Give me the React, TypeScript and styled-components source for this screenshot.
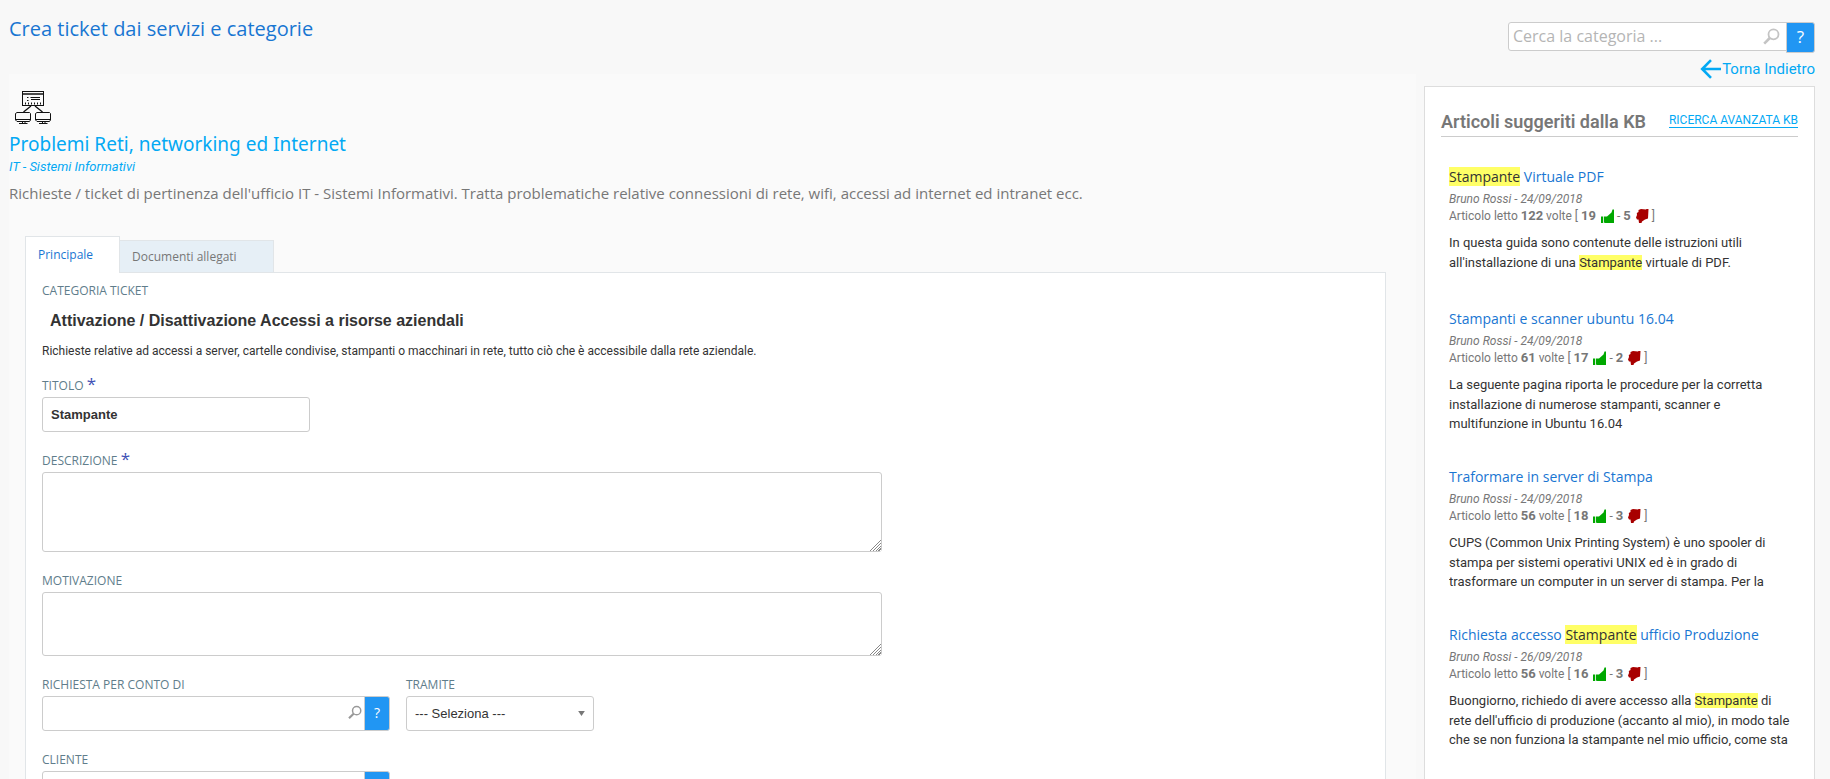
import React from 'react';
import styled, { createGlobalStyle, css } from 'styled-components';

const openSans = '"Open Sans", "Noto Sans", sans-serif';
const roboto = 'Roboto, "Liberation Sans", sans-serif';
const arial = '"Liberation Sans", Arial, sans-serif';

const colors = {
  page: '#f8f8f8',
  surface: '#fafafa',
  border: '#dddddd',
  panelBorder: '#e1e5e8',
  control: '#cccccc',
  title: '#1976d2',
  accent: '#03a9f4',
  button: '#2196f3',
  muted: '#777777',
  label: '#607d8b',
  text: '#333333',
  mark: '#ffff66',
};

const GlobalStyle = createGlobalStyle`
  *, *::before, *::after { box-sizing: border-box; }
  body {
    margin: 0;
    background: ${colors.page};
    color: ${colors.text};
    font-family: ${roboto};
    font-size: 13px;
  }
  h1, h2, h3, p { margin: 0; font-weight: 400; }
  a { text-decoration: none; }
`;

const Page = styled.div`
  display: flex;
  align-items: stretch;
  height: 100vh;
  overflow: hidden;
  padding: 0 15px 0 9px;
`;

const MainColumn = styled.main`
  flex: 1;
  min-width: 0;
  display: flex;
  flex-direction: column;
`;

const PageTitle = styled.h1`
  flex: none;
  height: 74px;
  padding-top: 15px;
  color: ${colors.title};
  font-family: ${openSans};
  font-size: 20px;
  line-height: 28px;
`;

const Surface = styled.section`
  flex: 1 0 auto;
  padding: 16px 30px 40px 0;
  background: ${colors.surface};
`;

const NetworkIcon = styled.svg`
  display: block;
  width: 38px;
  height: 36px;
  margin-left: 5px;
`;

const CategoryTitle = styled.h2`
  margin-top: 4px;
  color: ${colors.accent};
  font-family: "Noto Sans", sans-serif;
  font-size: 19px;
  line-height: 28px;
`;

const Department = styled.p`
  color: ${colors.accent};
  font-size: 13px;
  font-style: italic;
  line-height: 18px;
`;

const Description = styled.p`
  margin-top: 7px;
  color: ${colors.muted};
  font-family: ${openSans};
  font-size: 15px;
  line-height: 20px;
`;

const Tabs = styled.div`
  display: flex;
  align-items: flex-end;
  margin: 33px 0 0 16px;
`;

const Tab = styled.button<{ $active?: boolean }>`
  width: ${p => (p.$active ? 95 : 155)}px;
  height: ${p => (p.$active ? 36 : 32)}px;
  margin-left: ${p => (p.$active ? 0 : -1)}px;
  padding: 0 12px;
  border: 1px solid ${colors.panelBorder};
  border-bottom-width: 0;
  background: ${p => (p.$active ? '#ffffff' : '#e6eff6')};
  color: ${p => (p.$active ? colors.title : colors.muted)};
  font-family: ${openSans};
  font-size: 12px;
  text-align: left;
  ${p => p.$active && css`
    position: relative;
    margin-bottom: -1px;
    height: 37px;
    padding-bottom: 2px;
  `}
`;

const Panel = styled.form`
  display: flex;
  flex-direction: column;
  align-items: flex-start;
  margin-left: 16px;
  padding: 10px 16px 40px;
  border: 1px solid ${colors.panelBorder};
  background: #ffffff;
`;

const labelText = css`
  display: block;
  height: 16px;
  color: ${colors.label};
  font-family: ${openSans};
  font-size: 12px;
  line-height: 16px;
`;

const Caption = styled.div`${labelText}`;
const Label = styled.label`${labelText}`;

const Required = styled.span`
  color: #3f51b5;
  font-size: 17px;
  line-height: 8px;
`;

const CategoryName = styled.h3`
  margin: 12px 0 0 8px;
  font-family: ${arial};
  font-size: 16px;
  font-weight: 700;
  line-height: 20px;
`;

const CategoryNote = styled.p`
  margin: 12px 0 19px;
  font-size: 12px;
  line-height: 16px;
`;

const Field = styled.div`
  display: flex;
  flex-direction: column;
  gap: 3px;
  margin-bottom: 21px;
`;

const FieldRow = styled.div`
  display: flex;
  gap: 16px;
`;

const control = css`
  border: 1px solid ${colors.control};
  border-radius: 3px;
  background-color: #ffffff;
  color: ${colors.text};
  font-family: ${arial};
  font-size: 13px;
  outline: none;
`;

const TextInput = styled.input`
  ${control}
  width: 268px;
  height: 35px;
  padding: 0 8px;
  font-weight: 700;
`;

const TextArea = styled.textarea<{ $height: number }>`
  ${control}
  display: block;
  width: 840px;
  height: ${p => p.$height}px;
  padding: 8px;
  resize: both;
  &::-webkit-resizer {
    background:
      linear-gradient(135deg, #ffffff 60%, transparent 60%),
      repeating-linear-gradient(135deg, #ffffff 0 1px, #888888 1px 2px);
  }
`;

const SelectBox = styled.div`
  display: flex;
  align-items: center;
  position: relative;
`;

const Select = styled.select`
  ${control}
  width: 188px;
  height: 35px;
  padding: 0 8px;
  appearance: none;
`;

const Caret = styled.svg`
  position: absolute;
  right: 9px;
  width: 7px;
  height: 5px;
  pointer-events: none;
`;

const Lookup = styled.div<{ $width: number }>`
  display: flex;
  align-items: flex-start;
  position: relative;
  width: ${p => p.$width}px;
`;

const LookupInput = styled.input<{ $search?: boolean }>`
  ${control}
  flex: 1;
  min-width: 0;
  height: ${p => (p.$search ? 29 : 35)}px;
  padding: ${p => (p.$search ? '0 32px 2px 4px' : '0 32px 0 8px')};
  border-radius: 3px 0 0 3px;
  font-family: ${p => (p.$search ? openSans : arial)};
  font-size: ${p => (p.$search ? 16 : 13)}px;
  &::placeholder { color: #b5b5b5; opacity: 1; }
`;

const LookupButton = styled.button<{ $search?: boolean }>`
  width: ${p => (p.$search ? 29 : 26)}px;
  height: ${p => (p.$search ? 31 : 35)}px;
  margin-left: -1px;
  padding: 0 0 2px;
  border: 1px solid ${colors.control};
  border-radius: 0 3px 3px 0;
  background: ${colors.button};
  color: #ffffff;
  font-family: ${openSans};
  font-size: ${p => (p.$search ? 17 : 14)}px;
`;

const Magnifier = styled.svg<{ $search?: boolean }>`
  position: absolute;
  top: ${p => (p.$search ? 6 : 9)}px;
  right: ${p => (p.$search ? 35 : 28)}px;
  width: ${p => (p.$search ? 17 : 14)}px;
  height: ${p => (p.$search ? 17 : 15)}px;
  color: ${p => (p.$search ? '#c4c4c4' : '#999999')};
  pointer-events: none;
`;

const SideColumn = styled.aside`
  display: flex;
  flex-direction: column;
  align-items: flex-end;
  flex: none;
  width: 399px;
  padding-top: 22px;
`;

const BackLink = styled.a`
  display: flex;
  align-items: center;
  height: 20px;
  margin: 6px 0 7px;
  color: ${colors.accent};
  font-size: 15px;
  svg { width: 22px; height: 20px; }
`;

const Knowledge = styled.section`
  flex: 1 0 auto;
  width: 391px;
  padding: 22px 16px 16px;
  border: 1px solid ${colors.border};
  background: #ffffff;
`;

const KnowledgeHeader = styled.header`
  display: flex;
  justify-content: space-between;
  align-items: flex-start;
  height: 28px;
  margin-bottom: 28px;
  border-bottom: 1px solid ${colors.control};
`;

const KnowledgeTitle = styled.h2`
  color: ${colors.muted};
  font-size: 18px;
  font-weight: 600;
  line-height: 26px;
`;

const AdvancedLink = styled.a`
  margin-top: 4px;
  border-bottom: 1px solid ${colors.accent};
  color: ${colors.accent};
  font-size: 12px;
  line-height: 14px;
`;

const Article = styled.article`
  margin: 0 8px 35px;
`;

const ArticleTitle = styled.h3`
  font-family: ${openSans};
  font-size: 14px;
  line-height: 24px;
  a { color: ${colors.title}; }
`;

const Mark = styled.mark`
  background: ${colors.mark};
  color: inherit;
  h3 & { color: ${colors.text}; }
`;

const Meta = styled.p`
  margin-top: 2px;
  color: ${colors.muted};
  font-size: 12px;
  font-style: italic;
  line-height: 16px;
`;

const Stats = styled.p`
  display: flex;
  align-items: center;
  color: ${colors.muted};
  font-size: 12px;
  line-height: 18px;
  white-space: pre;
  b { font-weight: 700; font-size: 13px; }
`;

const Thumb = styled.svg`
  width: 13px;
  height: 14px;
  margin-left: 5px;
`;

const Excerpt = styled.p`
  max-height: 55px;
  margin-top: 8px;
  overflow: hidden;
  font-size: 13px;
  line-height: 1.5;
`;

function MagnifierIcon({ search }: { search?: boolean }) {
  return (
    <Magnifier $search={search} viewBox="0 0 17 17" fill="none" stroke="currentColor" aria-hidden="true">
      <circle cx="10.5" cy="6.3" r="5" strokeWidth="1.8" />
      <path d="M6.8 10 1.2 15.6" strokeWidth="2.6" />
    </Magnifier>
  );
}

function ServersIcon() {
  return (
    <NetworkIcon viewBox="0 0 38 36" fill="none" stroke="#111" aria-hidden="true">
      <rect x="8.5" y="1.5" width="21" height="14" />
      <path d="M9 4H29" strokeWidth="1.5" />
      <path d="M13 7.500H14.500M16.500 7.500H26M13 10.500H14.500M17 9.500H26" />
      <path d="M11 13.500H27" strokeDasharray="1 2" strokeWidth="2" />
      <path d="M17 16 9.500 22M21 16 28.500 22" strokeWidth="1.300" />
      <path d="M3 22.500H15.500L16.500 23.500V30L15.500 31.500H3L1.500 30V23.500ZM23 22.500H35.500L36.500 23.500V30L35.500 31.500H23L21.500 30V23.500Z" />
      <path d="M2 29.500H16M22 29.500H36M5 33.500H13.500M25 33.500H33.500M8.500 31V33M11 31V33M28.500 31V33M31 31V33" />
    </NetworkIcon>
  );
}

function LookupField({ id, label }: { id: string; label: string }) {
  return (
    <Field>
      <Label htmlFor={id}>{label}</Label>
      <Lookup $width={348}>
        <LookupInput id={id} type="text" />
        <MagnifierIcon />
        <LookupButton type="button" aria-label={`Aiuto ${label}`}>?</LookupButton>
      </Lookup>
    </Field>
  );
}

interface ArticleData {
  title: string;
  date: string;
  reads: number;
  up: number;
  down: number;
  excerpt: string;
}

const articles: ArticleData[] = [
  {
    title: 'Stampante Virtuale PDF', date: '24/09/2018', reads: 122, up: 19, down: 5,
    excerpt: "In questa guida sono contenute delle istruzioni utili all'installazione di una Stampante virtuale di PDF.",
  },
  {
    title: 'Stampanti e scanner ubuntu 16.04', date: '24/09/2018', reads: 61, up: 17, down: 2,
    excerpt: 'La seguente pagina riporta le procedure per la corretta installazione di numerose stampanti, scanner e multifunzione in Ubuntu 16.04',
  },
  {
    title: 'Traformare in server di Stampa', date: '24/09/2018', reads: 56, up: 18, down: 3,
    excerpt: 'CUPS (Common Unix Printing System) è uno spooler di stampa per sistemi operativi UNIX ed è in grado di trasformare un computer in un server di stampa. Per la',
  },
  {
    title: 'Richiesta accesso Stampante ufficio Produzione', date: '26/09/2018', reads: 56, up: 16, down: 3,
    excerpt: "Buongiorno, richiedo di avere accesso alla Stampante di rete dell'ufficio di produzione (accanto al mio), in modo tale che se non funziona la stampante nel mio ufficio, come sta",
  },
];

function highlight(text: string) {
  return text
    .split(/(Stampante)/)
    .filter(Boolean)
    .map((part, i) => (part === 'Stampante' ? <Mark key={i}>{part}</Mark> : part));
}

function ArticleCard({ title, date, reads, up, down, excerpt }: ArticleData) {
  return (
    <Article>
      <ArticleTitle><a href="#articolo">{highlight(title)}</a></ArticleTitle>
      <Meta>Bruno Rossi - {date}</Meta>
      <Stats>
        Articolo letto <b>{reads}</b> volte [ <b>{up}</b>
        <Thumb viewBox="0 0 13 14" fill="#00a800" aria-hidden="true">
          <path d="M0 7.500H2.200V14H0ZM3 7.500H6L10.500 3.500 11.500.5H13V14H4L3 13.500Z" />
        </Thumb>
        {' - '}<b>{down}</b>
        <Thumb viewBox="0 0 13 14" fill="#a80000" aria-hidden="true">
          <path d="M2.500 1 5 0 10 .5 10.500 0H12.500L12 9.500 9 10.500 6 12.500 5.500 14H3L2.500 10.500H1L0 8.500 1 6 .800 4 2.500 3Z" />
        </Thumb>
        {' ]'}
      </Stats>
      <Excerpt>{highlight(excerpt)}</Excerpt>
    </Article>
  );
}

export default function App() {
  return (
    <>
      <GlobalStyle />
      <Page>
        <MainColumn>
          <PageTitle>Crea ticket dai servizi e categorie</PageTitle>
          <Surface>
            <ServersIcon />
            <CategoryTitle>Problemi Reti, networking ed Internet</CategoryTitle>
            <Department>IT - Sistemi Informativi</Department>
            <Description>
              Richieste / ticket di pertinenza dell'ufficio IT - Sistemi Informativi. Tratta problematiche relative
              connessioni di rete, wifi, accessi ad internet ed intranet ecc.
            </Description>
            <Tabs role="tablist">
              <Tab type="button" role="tab" aria-selected="true" $active>Principale</Tab>
              <Tab type="button" role="tab" aria-selected="false">Documenti allegati</Tab>
            </Tabs>
            <Panel>
              <Caption>CATEGORIA TICKET</Caption>
              <CategoryName>Attivazione / Disattivazione Accessi a risorse aziendali</CategoryName>
              <CategoryNote>
                Richieste relative ad accessi a server, cartelle condivise, stampanti o macchinari in rete, tutto ciò
                che è accessibile dalla rete aziendale.
              </CategoryNote>
              <Field>
                <Label htmlFor="titolo">TITOLO <Required>*</Required></Label>
                <TextInput id="titolo" type="text" defaultValue="Stampante" />
              </Field>
              <Field>
                <Label htmlFor="descrizione">DESCRIZIONE <Required>*</Required></Label>
                <TextArea id="descrizione" $height={80} />
              </Field>
              <Field>
                <Label htmlFor="motivazione">MOTIVAZIONE</Label>
                <TextArea id="motivazione" $height={64} />
              </Field>
              <FieldRow>
                <LookupField id="richiedente" label="RICHIESTA PER CONTO DI" />
                <Field>
                  <Label htmlFor="tramite">TRAMITE</Label>
                  <SelectBox>
                    <Select id="tramite" defaultValue="">
                      <option value="">--- Seleziona ---</option>
                    </Select>
                    <Caret viewBox="0 0 8 6" fill="#777" aria-hidden="true"><path d="M0 0H8L4 6Z" /></Caret>
                  </SelectBox>
                </Field>
              </FieldRow>
              <LookupField id="cliente" label="CLIENTE" />
            </Panel>
          </Surface>
        </MainColumn>
        <SideColumn>
          <Lookup $width={307}>
            <LookupInput $search type="text" placeholder="Cerca la categoria ..." aria-label="Cerca la categoria" />
            <MagnifierIcon search />
            <LookupButton $search type="button" aria-label="Aiuto ricerca">?</LookupButton>
          </Lookup>
          <BackLink href="#indietro">
            <svg viewBox="0 0 22 20" fill="none" stroke="currentColor" strokeWidth="2.6" aria-hidden="true">
              <path d="M21 10H2M11 1.200 2.200 10 11 18.800" />
            </svg>
            Torna Indietro
          </BackLink>
          <Knowledge>
            <KnowledgeHeader>
              <KnowledgeTitle>Articoli suggeriti dalla KB</KnowledgeTitle>
              <AdvancedLink href="#ricerca">RICERCA AVANZATA KB</AdvancedLink>
            </KnowledgeHeader>
            {articles.map(article => <ArticleCard key={article.title} {...article} />)}
          </Knowledge>
        </SideColumn>
      </Page>
    </>
  );
}
